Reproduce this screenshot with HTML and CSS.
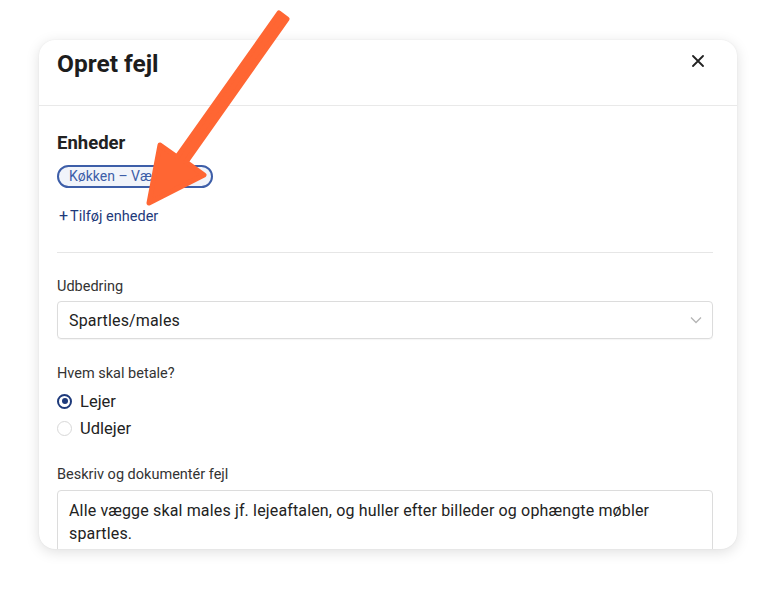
FILE: index.html
```html
<!DOCTYPE html>
<html lang="da">
<head>
	<meta charset="UTF-8">
	<title>Opret fejl</title>
	<link rel="stylesheet" href="styles.css">
</head>
<body>
	<div class="modal">
		<div class="modal-head">
			<h1>Opret fejl</h1>
			<span class="close">
				<svg width="12" height="12" viewBox="0 0 12 12"><path d="M1 1L11 11M11 1L1 11" stroke="#222" stroke-width="1.8" stroke-linecap="round"/></svg>
			</span>
		</div>
		<div class="modal-body">
			<h2>Enheder</h2>
			<div class="chips">
				<span class="chip">Køkken – Vægge</span>
			</div>
			<a class="add-link" href="#"><span class="plus">+</span>Tilføj enheder</a>
			<hr class="divider">

			<label class="field-label">Udbedring</label>
			<div class="select">
				<span>Spartles/males</span>
				<svg width="12" height="8" viewBox="0 0 12 8"><path d="M1 1.5L6 6.5L11 1.5" fill="none" stroke="#b5b5b5" stroke-width="1.3"/></svg>
			</div>

			<label class="field-label gap">Hvem skal betale?</label>
			<div class="radios">
				<div class="radio checked"><span class="dot"></span>Lejer</div>
				<div class="radio"><span class="dot"></span>Udlejer</div>
			</div>

			<label class="field-label gap">Beskriv og dokumentér fejl</label>
			<div class="textarea">Alle vægge skal males jf. lejeaftalen, og huller efter billeder og ophængte møbler spartles.</div>
		</div>
	</div>

	<!-- pil oven på skærmbilledet -->
	<svg class="arrow" width="776" height="589" viewBox="0 0 776 589">
		<polygon points="279,13 287,19 186,162 204,175 149,203 160,145 177,157"
			fill="#ff6633" stroke="#ff6633" stroke-width="5" stroke-linejoin="round"/>
	</svg>
</body>
</html>
```

FILE: styles.css
```css
*{
	margin: 0;
	padding: 0;
	box-sizing: border-box;
}
body{
	background: #fff;
	font-family: "Roboto", "Liberation Sans", sans-serif;
	color: #222;
	width: 776px;
	height: 589px;
	overflow: hidden;
}
.modal{
	width: 698px;
	height: 509px;
	margin: 40px 0 0 39px;
	background: #fff;
	border-radius: 16px;
	box-shadow: 0 3px 14px rgba(0,0,0,0.13), 0 0 2px rgba(0,0,0,0.06);
	overflow: hidden;
}
.modal-head{
	height: 66px;
	padding: 10px 33px 0 18px;
	display: flex;
	justify-content: space-between;
	align-items: flex-start;
	border-bottom: 1px solid #e9e9e9;
}
.modal-head h1{
	font-size: 24.5px;
	line-height: 28px;
	font-weight: 700;
	color: #1d1d1d;
}
.close{
	display: flex;
	margin-top: 5px;
}
.modal-body{
	padding: 26px 24px 0 18px;
}
.modal-body h2{
	font-size: 18.5px;
	line-height: 22px;
	font-weight: 700;
	color: #222;
}
.chips{
	margin-top: 11px;
	display: flex;
}
.chip{
	display: inline-block;
	height: 23px;
	width: 156px;
	padding: 0 10px;
	border: 2px solid #3d5ea8;
	border-radius: 12px;
	background: #f1f4fa;
	color: #3d5ea8;
	font-size: 14px;
	line-height: 19px;
	white-space: nowrap;
	overflow: hidden;
}
.add-link{
	display: flex;
	align-items: center;
	height: 20px;
	margin-top: 18px;
	font-size: 14.5px;
	color: #1e3a7b;
	text-decoration: none;
}
.plus{
	margin: 0 2px 0 2px;
	font-size: 16px;
	line-height: 20px;
}
.divider{
	margin-top: 26px;
	border: none;
	border-top: 1px solid #e6e6e6;
}
.field-label{
	display: block;
	margin-top: 24px;
	font-size: 14.5px;
	line-height: 20px;
	color: #333;
}
.field-label.gap{
	margin-top: 25px;
}
.select{
	margin-top: 4px;
	height: 38px;
	border: 1px solid #dcdcdc;
	border-radius: 4px;
	padding: 0 10px 0 11px;
	display: flex;
	align-items: center;
	justify-content: space-between;
	font-size: 16px;
	letter-spacing: 0.15px;
	color: #222;
	box-shadow: 0 1px 1px rgba(0,0,0,0.04);
}
.radios{
	margin-top: 5px;
	display: flex;
	flex-direction: column;
	gap: 3px;
}
.radio{
	display: flex;
	align-items: center;
	height: 24px;
	font-size: 16.5px;
	color: #222;
}
.radio .dot{
	width: 15px;
	height: 15px;
	border: 1.5px solid #d8d8d8;
	border-radius: 50%;
	margin-right: 8px;
	display: flex;
	align-items: center;
	justify-content: center;
}
.radio.checked .dot{
	border: 2px solid #1e3a7b;
}
.radio.checked .dot::after{
	content: "";
	width: 6px;
	height: 6px;
	border-radius: 50%;
	background: #1e3a7b;
}
.textarea{
	margin-top: 5px;
	height: 120px;
	border: 1px solid #dcdcdc;
	border-radius: 4px;
	padding: 8px 11px;
	font-size: 16px;
	letter-spacing: 0.15px;
	line-height: 23px;
	color: #222;
}
.arrow{
	position: absolute;
	left: 0;
	top: 0;
	pointer-events: none;
}
```
